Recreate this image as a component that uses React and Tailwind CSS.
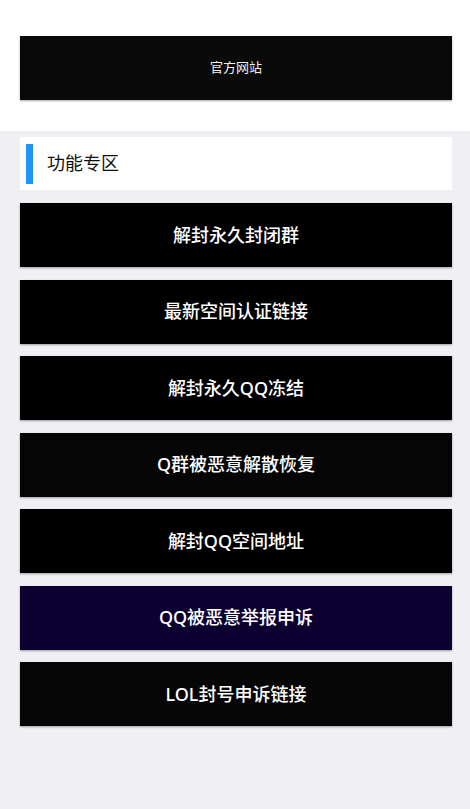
import React from 'react';

const font = { fontFamily: '"Noto Sans", "Noto Sans CJK SC", sans-serif' };

const links = [
  { label: '解封永久封闭群', bg: 'bg-[#000000]' },
  { label: '最新空间认证链接', bg: 'bg-[#000000]' },
  { label: '解封永久QQ冻结', bg: 'bg-[#000000]' },
  { label: 'Q群被恶意解散恢复', bg: 'bg-[#050505]' },
  { label: '解封QQ空间地址', bg: 'bg-[#000000]' },
  { label: 'QQ被恶意举报申诉', bg: 'bg-[#0c0030]' },
  { label: 'LOL封号申诉链接', bg: 'bg-[#060606]' },
];

export default function App() {
  return (
    <div className="min-h-[809px] bg-[#efeff4]" style={font}>
      {/* top */}
      <section className="bg-white pl-5 pr-[18px] pt-9 pb-[31px]">
        <a className="flex h-16 items-center justify-center bg-[#0a0a0a] text-[13px] text-[#f0f0f0] shadow-[0_1px_2px_rgba(0,0,0,0.35)]">
          官方网站
        </a>
      </section>

      <section className="pl-5 pr-[18px] pt-[6px]">
        <div className="flex h-[53px] items-center bg-white pl-[6px]">
          <div className="h-[40px] w-[7px] bg-[#2196f3]" />
          <h2 className="ml-[14px] text-[18px] text-[#111]">功能专区</h2>
        </div>

        <div className="mt-[13px] flex flex-col gap-[12.5px]">
          {links.map((l, i) => (
            <a
              key={i}
              className={`flex h-16 items-center justify-center ${l.bg} text-[18px] font-medium text-white shadow-[0_1px_2px_rgba(0,0,0,0.35)]`}
            >
              {l.label}
            </a>
          ))}
        </div>
      </section>
    </div>
  );
}
